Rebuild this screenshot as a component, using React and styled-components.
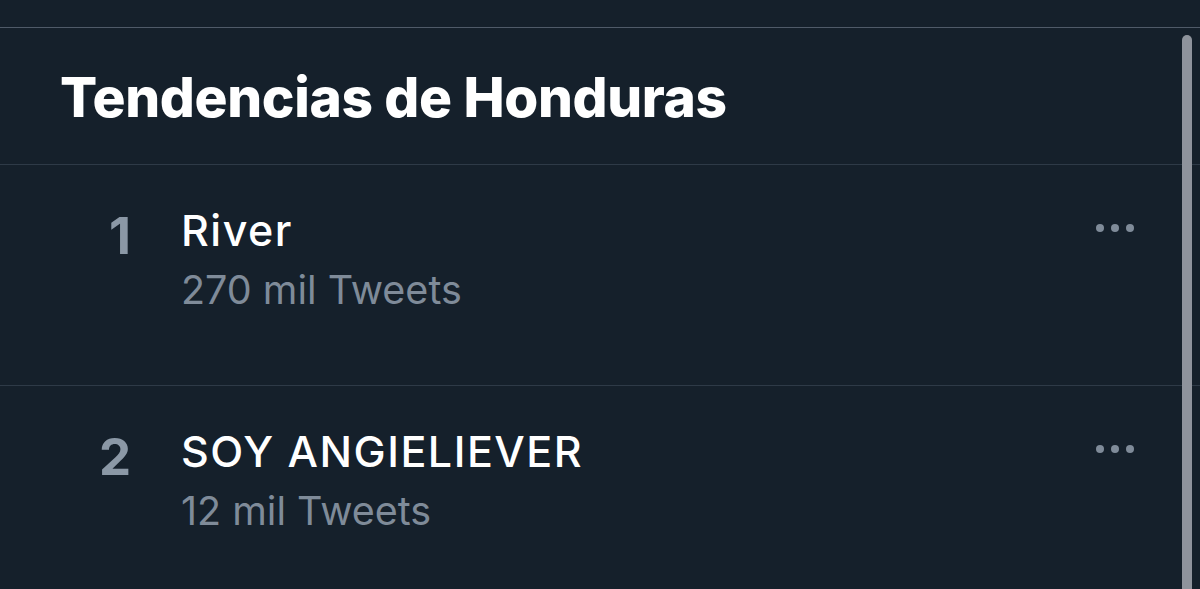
import React from 'react';
import styled, { createGlobalStyle } from 'styled-components';

const trends = [
  { rank: 1, name: 'River', count: '270 mil Tweets' },
  { rank: 2, name: 'SOY ANGIELIEVER', count: '12 mil Tweets' },
];

const GlobalStyle = createGlobalStyle`
  html, body {
    margin: 0;
    padding: 0;
    background: #15202b;
    overflow: hidden;
  }
  body {
    font-family: Inter, "Noto Sans", "Liberation Sans", sans-serif;
    -webkit-font-smoothing: antialiased;
  }
`;

const Page = styled.div`
  position: relative;
  height: 589px;
  padding-top: 27px;
  box-sizing: border-box;
  background: #15202b;
`;

const Panel = styled.section`
  border-top: 1px solid #4f5a68;
`;

const Header = styled.h2`
  margin: 0;
  height: 137px;
  box-sizing: border-box;
  padding: 36px 0 0 60px;
  font-size: 55px;
  font-weight: 800;
  letter-spacing: -0.35px;
  line-height: 1.2;
  color: #ffffff;
  border-bottom: 1px solid #2e3a47;
`;

const Row = styled.div`
  display: flex;
  align-items: flex-start;
  height: 221px;
  box-sizing: border-box;
  padding: 40px 62px 0 60px;
  border-bottom: 1px solid #2e3a47;
`;

const Rank = styled.div`
  width: 71px;
  flex-shrink: 0;
  text-align: right;
  font-size: 51px;
  font-weight: 700;
  line-height: 1.2;
  color: #8b98a6;
`;

const Body = styled.div`
  flex: 1;
  margin-left: 50px;
  display: flex;
  flex-direction: column;
`;

const Name = styled.div`
  font-size: 43px;
  font-weight: 500;
  letter-spacing: 1.5px;
  line-height: 1.2;
  color: #ffffff;
`;

const Count = styled.div`
  margin-top: 10px;
  font-size: 39.5px;
  font-weight: 400;
  line-height: 1.2;
  color: #7f8b99;
`;

const More = styled.svg`
  flex-shrink: 0;
  margin-top: 18px;
  width: 44px;
  height: 10px;
  fill: #7f8b99;
`;

const ScrollThumb = styled.div`
  position: absolute;
  right: 8px;
  top: 35px;
  bottom: -20px;
  width: 10px;
  border-radius: 5px;
  background: #8e939c;
`;

const MoreIcon = () => (
  <More viewBox="0 0 44 10">
    <circle cx="6" cy="5" r="4" />
    <circle cx="21" cy="5" r="4" />
    <circle cx="36" cy="5" r="4" />
  </More>
);

const App = () => (
  <>
    <GlobalStyle />
    <Page>
      <Panel>
        <Header>Tendencias de Honduras</Header>
        {trends.map((t) => (
          <Row key={t.rank}>
            <Rank>{t.rank}</Rank>
            <Body>
              <Name>{t.name}</Name>
              <Count>{t.count}</Count>
            </Body>
            <MoreIcon />
          </Row>
        ))}
      </Panel>
      <ScrollThumb />
    </Page>
  </>
);

export default App;
